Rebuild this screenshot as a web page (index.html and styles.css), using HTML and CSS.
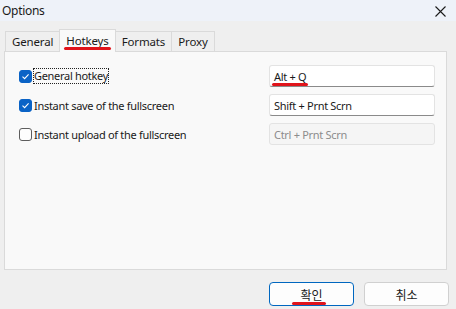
FILE: index.html
```html
<!DOCTYPE html>
<html lang="en">
<head>
  <meta charset="utf-8">
  <title>Options</title>
  <link rel="stylesheet" href="styles.css">
</head>
<body>
  <div class="window">
    <header class="titlebar">
      <span class="title">Options</span>
      <svg class="close" width="11" height="11" viewBox="0 0 11 11">
        <path d="M0.5 0.5 L10.5 10.5 M10.5 0.5 L0.5 10.5" stroke="#1a1a1a" stroke-width="1.1" fill="none"/>
      </svg>
    </header>

    <nav class="tabs">
      <span class="tab">General</span>
      <span class="tab active"><span class="mark">Hotkeys</span></span>
      <span class="tab">Formats</span>
      <span class="tab">Proxy</span>
    </nav>

    <section class="panel">
      <div class="row">
        <label class="check">
          <span class="box checked"><svg width="9" height="9" viewBox="0 0 9 9"><path d="M1.5 4.6 L3.6 6.6 L7.6 2.3" stroke="#fff" stroke-width="1.1" fill="none"/></svg></span>
          <span class="focus">General hotkey</span>
        </label>
        <div class="field"><span class="mark">Alt + Q</span></div>
      </div>
      <div class="row">
        <label class="check">
          <span class="box checked"><svg width="9" height="9" viewBox="0 0 9 9"><path d="M1.5 4.6 L3.6 6.6 L7.6 2.3" stroke="#fff" stroke-width="1.1" fill="none"/></svg></span>
          <span>Instant save of the fullscreen</span>
        </label>
        <div class="field">Shift + Prnt Scrn</div>
      </div>
      <div class="row">
        <label class="check">
          <span class="box"></span>
          <span>Instant upload of the fullscreen</span>
        </label>
        <div class="field disabled">Ctrl + Prnt Scrn</div>
      </div>
    </section>

    <footer class="buttons">
      <button class="btn primary"><span class="mark wide">확인</span></button>
      <button class="btn">취소</button>
    </footer>
  </div>
</body>
</html>
```

FILE: styles.css
```css
html, body {
  margin: 0;
  padding: 0;
}

body {
  font-family: "Noto Sans", "Noto Sans CJK KR", sans-serif;
  font-size: 11px;
  letter-spacing: -0.3px;
  color: #1a1a1a;
  background: #efefef;
}

.window {
  width: 456px;
  height: 309px;
  display: flex;
  flex-direction: column;
  overflow: hidden;
}

.titlebar {
  height: 21px;
  background: #eef2f9;
  display: flex;
  align-items: center;
  justify-content: space-between;
  padding: 0 10px 0 2px;
}

.title {
  font-size: 12px;
}

.close {
  margin-top: 1px;
}

.tabs {
  display: flex;
  align-items: flex-end;
  height: 23px;
  margin-top: 7px;
  padding-left: 5px;
  position: relative;
  z-index: 1;
}

.tab {
  height: 20px;
  padding: 0 6px;
  border: 1px solid #dadada;
  border-bottom: none;
  margin-right: -1px;
  background: #efefef;
  display: flex;
  align-items: center;
  box-sizing: border-box;
  font-size: 11.5px;
  letter-spacing: -0.15px;
}

.tab.active {
  height: 23px;
  background: #f9f9f9;
  margin-bottom: -1px;
  padding: 0 6px 2px;
}

.mark {
  position: relative;
}

.mark::after {
  content: "";
  position: absolute;
  left: -2px;
  right: -2px;
  bottom: -2px;
  height: 3px;
  border-radius: 2px;
  background: #e0141b;
}

.mark.wide::after {
  left: -8px;
  right: -3px;
  bottom: -2px;
}

.panel {
  margin: 0 9px 0 4px;
  height: 219px;
  box-sizing: border-box;
  border: 1px solid #dadada;
  background: #f9f9f9;
  padding: 13px 11px 0 14px;
  display: flex;
  flex-direction: column;
  gap: 7px;
}

.row {
  display: flex;
  align-items: center;
  justify-content: space-between;
  height: 22px;
}

.check {
  display: flex;
  align-items: center;
  gap: 2px;
}

.box {
  width: 13px;
  height: 13px;
  box-sizing: border-box;
  border: 1px solid #5d5d5d;
  border-radius: 3px;
  background: #fdfdfd;
  display: flex;
  align-items: center;
  justify-content: center;
}

.box.checked {
  background: #0a63c6;
  border-color: #0a63c6;
}

.focus {
  outline: 1px dotted #222;
  outline-offset: 0;
  line-height: 14px;
}

.field {
  width: 166px;
  height: 22px;
  box-sizing: border-box;
  background: #ffffff;
  border: 1px solid #e3e3e3;
  border-bottom: 1px solid #8a8a8a;
  border-radius: 3px;
  padding: 0 4px;
  display: flex;
  align-items: center;
}

.field.disabled {
  background: #f5f5f5;
  border-bottom-color: #e3e3e3;
  color: #8c8c8c;
}

.buttons {
  display: flex;
  justify-content: flex-end;
  gap: 10px;
  padding: 12px 7px 0 0;
}

.btn {
  width: 85px;
  height: 24px;
  font-family: "Noto Sans CJK KR", sans-serif;
  font-size: 12px;
  color: #1a1a1a;
  background: #fdfdfd;
  border: 1px solid #d0d0d0;
  border-radius: 4px;
  padding: 0;
}

.btn.primary {
  border-color: #0067c0;
}
```
